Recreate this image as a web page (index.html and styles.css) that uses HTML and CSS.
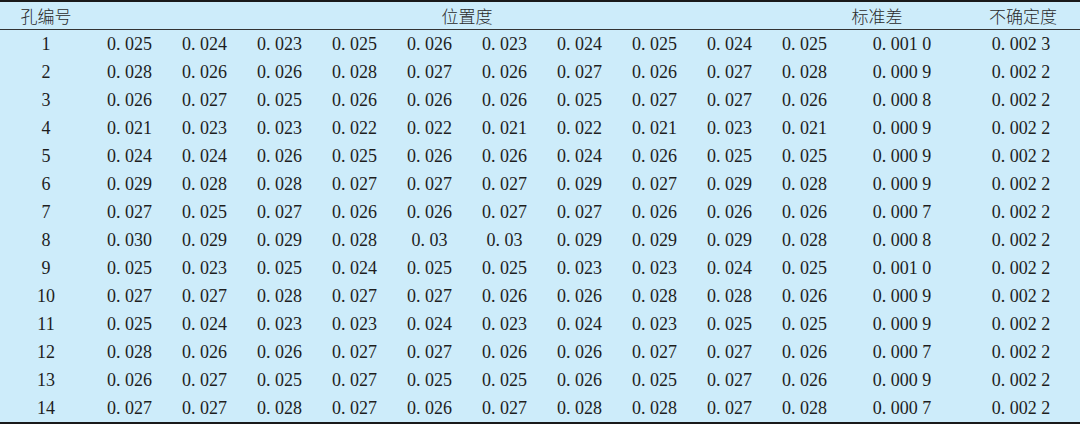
FILE: index.html
```html
<!DOCTYPE html>
<html lang="zh">
<head>
<meta charset="utf-8">
<link rel="stylesheet" href="styles.css">
</head>
<body>
<table class="data">
<colgroup>
<col class="c-id"><col class="c-v"><col class="c-v"><col class="c-v"><col class="c-v"><col class="c-v"><col class="c-v"><col class="c-v"><col class="c-v"><col class="c-v"><col class="c-v"><col class="c-std"><col class="c-unc">
</colgroup>
<thead>
<tr><th class="h">孔编号</th><th class="h" colspan="10">位置度</th><th class="h h-std">标准差</th><th class="h">不确定度</th></tr>
</thead>
<tbody>
<tr><td>1</td><td>0. 025</td><td>0. 024</td><td>0. 023</td><td>0. 025</td><td>0. 026</td><td>0. 023</td><td>0. 024</td><td>0. 025</td><td>0. 024</td><td>0. 025</td><td>0. 001 0</td><td>0. 002 3</td></tr>
<tr><td>2</td><td>0. 028</td><td>0. 026</td><td>0. 026</td><td>0. 028</td><td>0. 027</td><td>0. 026</td><td>0. 027</td><td>0. 026</td><td>0. 027</td><td>0. 028</td><td>0. 000 9</td><td>0. 002 2</td></tr>
<tr><td>3</td><td>0. 026</td><td>0. 027</td><td>0. 025</td><td>0. 026</td><td>0. 026</td><td>0. 026</td><td>0. 025</td><td>0. 027</td><td>0. 027</td><td>0. 026</td><td>0. 000 8</td><td>0. 002 2</td></tr>
<tr><td>4</td><td>0. 021</td><td>0. 023</td><td>0. 023</td><td>0. 022</td><td>0. 022</td><td>0. 021</td><td>0. 022</td><td>0. 021</td><td>0. 023</td><td>0. 021</td><td>0. 000 9</td><td>0. 002 2</td></tr>
<tr><td>5</td><td>0. 024</td><td>0. 024</td><td>0. 026</td><td>0. 025</td><td>0. 026</td><td>0. 026</td><td>0. 024</td><td>0. 026</td><td>0. 025</td><td>0. 025</td><td>0. 000 9</td><td>0. 002 2</td></tr>
<tr><td>6</td><td>0. 029</td><td>0. 028</td><td>0. 028</td><td>0. 027</td><td>0. 027</td><td>0. 027</td><td>0. 029</td><td>0. 027</td><td>0. 029</td><td>0. 028</td><td>0. 000 9</td><td>0. 002 2</td></tr>
<tr><td>7</td><td>0. 027</td><td>0. 025</td><td>0. 027</td><td>0. 026</td><td>0. 026</td><td>0. 027</td><td>0. 027</td><td>0. 026</td><td>0. 026</td><td>0. 026</td><td>0. 000 7</td><td>0. 002 2</td></tr>
<tr><td>8</td><td>0. 030</td><td>0. 029</td><td>0. 029</td><td>0. 028</td><td>0. 03</td><td>0. 03</td><td>0. 029</td><td>0. 029</td><td>0. 029</td><td>0. 028</td><td>0. 000 8</td><td>0. 002 2</td></tr>
<tr><td>9</td><td>0. 025</td><td>0. 023</td><td>0. 025</td><td>0. 024</td><td>0. 025</td><td>0. 025</td><td>0. 023</td><td>0. 023</td><td>0. 024</td><td>0. 025</td><td>0. 001 0</td><td>0. 002 2</td></tr>
<tr><td>10</td><td>0. 027</td><td>0. 027</td><td>0. 028</td><td>0. 027</td><td>0. 027</td><td>0. 026</td><td>0. 026</td><td>0. 028</td><td>0. 028</td><td>0. 026</td><td>0. 000 9</td><td>0. 002 2</td></tr>
<tr><td>11</td><td>0. 025</td><td>0. 024</td><td>0. 023</td><td>0. 023</td><td>0. 024</td><td>0. 023</td><td>0. 024</td><td>0. 023</td><td>0. 025</td><td>0. 025</td><td>0. 000 9</td><td>0. 002 2</td></tr>
<tr><td>12</td><td>0. 028</td><td>0. 026</td><td>0. 026</td><td>0. 027</td><td>0. 027</td><td>0. 026</td><td>0. 026</td><td>0. 027</td><td>0. 027</td><td>0. 026</td><td>0. 000 7</td><td>0. 002 2</td></tr>
<tr><td>13</td><td>0. 026</td><td>0. 027</td><td>0. 025</td><td>0. 027</td><td>0. 025</td><td>0. 025</td><td>0. 026</td><td>0. 025</td><td>0. 027</td><td>0. 026</td><td>0. 000 9</td><td>0. 002 2</td></tr>
<tr><td>14</td><td>0. 027</td><td>0. 027</td><td>0. 028</td><td>0. 027</td><td>0. 026</td><td>0. 027</td><td>0. 028</td><td>0. 028</td><td>0. 027</td><td>0. 028</td><td>0. 000 7</td><td>0. 002 2</td></tr>
</tbody>
</table>
</body>
</html>
```

FILE: styles.css
```css
html, body {
  margin: 0;
  padding: 0;
  background: #ffffff;
}

.data {
  width: 1080px;
  table-layout: fixed;
  border-collapse: collapse;
  border-spacing: 0;
  background: #cdecfa;
  border-top: 2px solid #1a1a1a;
  border-bottom: 2px solid #1a1a1a;
  color: #1e1e1e;
  font-family: "Liberation Serif", "Noto Sans CJK SC", serif;
  font-size: 18px;
}

.c-id { width: 92px; }
.c-v { width: 75px; }
.c-std { width: 120px; }
.c-unc { width: 118px; }

.data th,
.data td {
  padding: 0;
  text-align: center;
  white-space: nowrap;
  font-weight: normal;
}

.data thead th {
  height: 27px;
  line-height: 27px;
  border-bottom: 1px solid #333;
  font-family: "Noto Sans CJK SC", sans-serif;
  font-weight: 300;
  font-size: 17px;
  color: #2a2a2a;
}

.data thead .h-std {
  padding-right: 50px;
}

.data tbody td {
  height: 27px;
  padding-top: 1px;
  line-height: 27px;
}

.data thead th:last-child {
  padding-left: 4px;
}
```
